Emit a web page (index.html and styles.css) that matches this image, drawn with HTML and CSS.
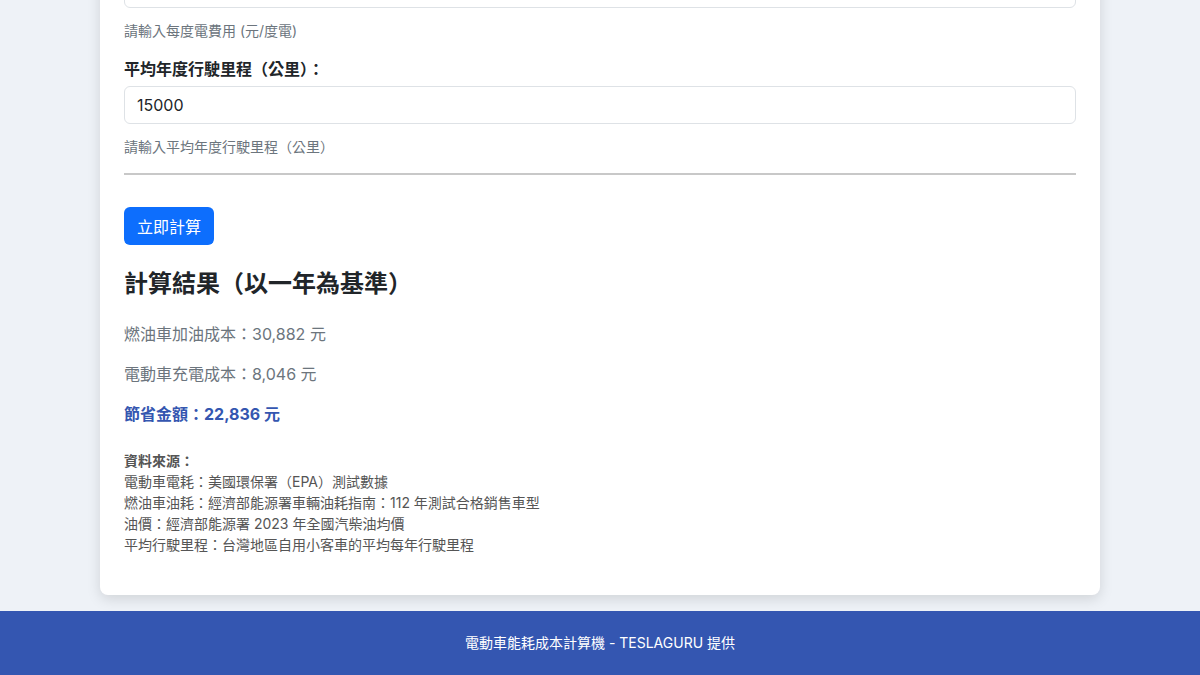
FILE: index.html
```html
<!DOCTYPE html>
<html lang="zh-Hant">
<head>
    <meta charset="UTF-8">
    <meta name="viewport" content="width=device-width, initial-scale=1.0">
    <title>電動車能耗成本計算機</title>
    <link rel="stylesheet" href="styles.css">
</head>
<body>
    <header class="page-header">
        <h1>電動車能耗成本計算機</h1>
    </header>

    <main class="calc-card">
        <div class="field">
            <label for="fuelUse">燃油車油耗（公里/公升）：</label>
            <input type="text" id="fuelUse" value="15.6">
            <p class="hint">請輸入燃油車平均油耗（公里/公升）</p>
        </div>
        <div class="field">
            <label for="evUse">電動車電耗（公里/度）：</label>
            <input type="text" id="evUse" value="6.5">
            <p class="hint">請輸入電動車平均電耗（公里/度）</p>
        </div>
        <div class="field">
            <label for="fuelPrice">油價（元/公升）：</label>
            <input type="text" id="fuelPrice" value="32.12">
            <p class="hint">請輸入每公升油價 (元/公升)</p>
        </div>
        <div class="field">
            <label for="elecPrice">每度電費用（元/度電）：</label>
            <input type="text" id="elecPrice" value="3.49">
            <p class="hint">請輸入每度電費用 (元/度電)</p>
        </div>
        <div class="field">
            <label for="distance">平均年度行駛里程（公里）：</label>
            <input type="text" id="distance" value="15000">
            <p class="hint">請輸入平均年度行駛里程（公里）</p>
        </div>

        <hr class="divider">

        <button class="calc-button" type="button" onclick="calculate()">立即計算</button>

        <section class="result">
            <h2>計算結果（以一年為基準）</h2>
            <p class="cost" id="fuelCost">燃油車加油成本：30,882 元</p>
            <p class="cost" id="evCost">電動車充電成本：8,046 元</p>
            <p class="saving" id="saving">節省金額：22,836 元</p>
        </section>

        <div class="sources">
            <strong>資料來源：</strong><br>
            電動車電耗：美國環保署（EPA）測試數據<br>
            燃油車油耗：經濟部能源署車輛油耗指南：112 年測試合格銷售車型<br>
            油價：經濟部能源署 2023 年全國汽柴油均價<br>
            平均行駛里程：台灣地區自用小客車的平均每年行駛里程
        </div>
    </main>

    <footer class="page-footer">電動車能耗成本計算機 - TESLAGURU 提供</footer>

    <script>
        function calculate() {
            let fuelUse = parseFloat(document.getElementById('fuelUse').value);
            let evUse = parseFloat(document.getElementById('evUse').value);
            let fuelPrice = parseFloat(document.getElementById('fuelPrice').value);
            let elecPrice = parseFloat(document.getElementById('elecPrice').value);
            let distance = parseFloat(document.getElementById('distance').value);
            let fuelCost = Math.round(distance / fuelUse * fuelPrice);
            let evCost = Math.round(distance / evUse * elecPrice);
            document.getElementById('fuelCost').textContent = `燃油車加油成本：${fuelCost.toLocaleString()} 元`;
            document.getElementById('evCost').textContent = `電動車充電成本：${evCost.toLocaleString()} 元`;
            document.getElementById('saving').textContent = `節省金額：${(fuelCost - evCost).toLocaleString()} 元`;
        }

        window.scrollTo(0, document.body.scrollHeight);
    </script>
</body>
</html>
```

FILE: styles.css
```css
body {
    margin: 0;
    background-color: #eef2f7;
    font-family: 'Inter', 'Noto Sans CJK TC', sans-serif;
    color: #212529;
    font-size: 16px;
    line-height: 1.5;
}

.page-header {
    text-align: center;
    padding: 24px 0 8px;
}

.page-header h1 {
    margin: 0;
    font-size: 28px;
    color: #3456b0;
}

.calc-card {
    width: 1000px;
    box-sizing: border-box;
    margin: 16px auto 16px;
    padding: 24px;
    background-color: #fff;
    border-radius: 8px;
    box-shadow: 0 4px 14px rgba(0, 0, 0, 0.13);
}

.field {
    margin-bottom: 16px;
}

.field label {
    display: block;
    font-weight: 700;
    margin-bottom: 5px;
}

.field input {
    display: block;
    width: 100%;
    box-sizing: border-box;
    height: 38px;
    padding: 6px 12px;
    font-family: inherit;
    font-size: 16px;
    color: #212529;
    border: 1px solid #dee2e6;
    border-radius: 6px;
}

.hint {
    margin: 12px 0 0;
    font-size: 14px;
    line-height: 21px;
    color: #6c757d;
}

.divider {
    margin: 0 0 32px;
    border: none;
    border-top: 2px solid #c8c8c8;
}

.calc-button {
    display: block;
    height: 38px;
    padding: 0 13px;
    font-family: inherit;
    font-size: 16px;
    color: #fff;
    background-color: #0d6efd;
    border: none;
    border-radius: 6px;
    cursor: pointer;
}

.result {
    margin-top: 24px;
}

.result h2 {
    margin: 0 0 24px;
    font-size: 24px;
    line-height: 29px;
    font-weight: 700;
}

.cost {
    margin: 0 0 16px;
    color: #6c757d;
}

.saving {
    margin: 0 0 16px;
    font-weight: 700;
    color: #3456b0;
}

.sources {
    margin: 24px 0 16px;
    font-size: 14px;
    line-height: 21px;
    color: #555;
}

.page-footer {
    background-color: #3456b1;
    color: #fff;
    text-align: center;
    font-size: 14px;
    line-height: 20px;
    padding: 22px 0;
}
```
